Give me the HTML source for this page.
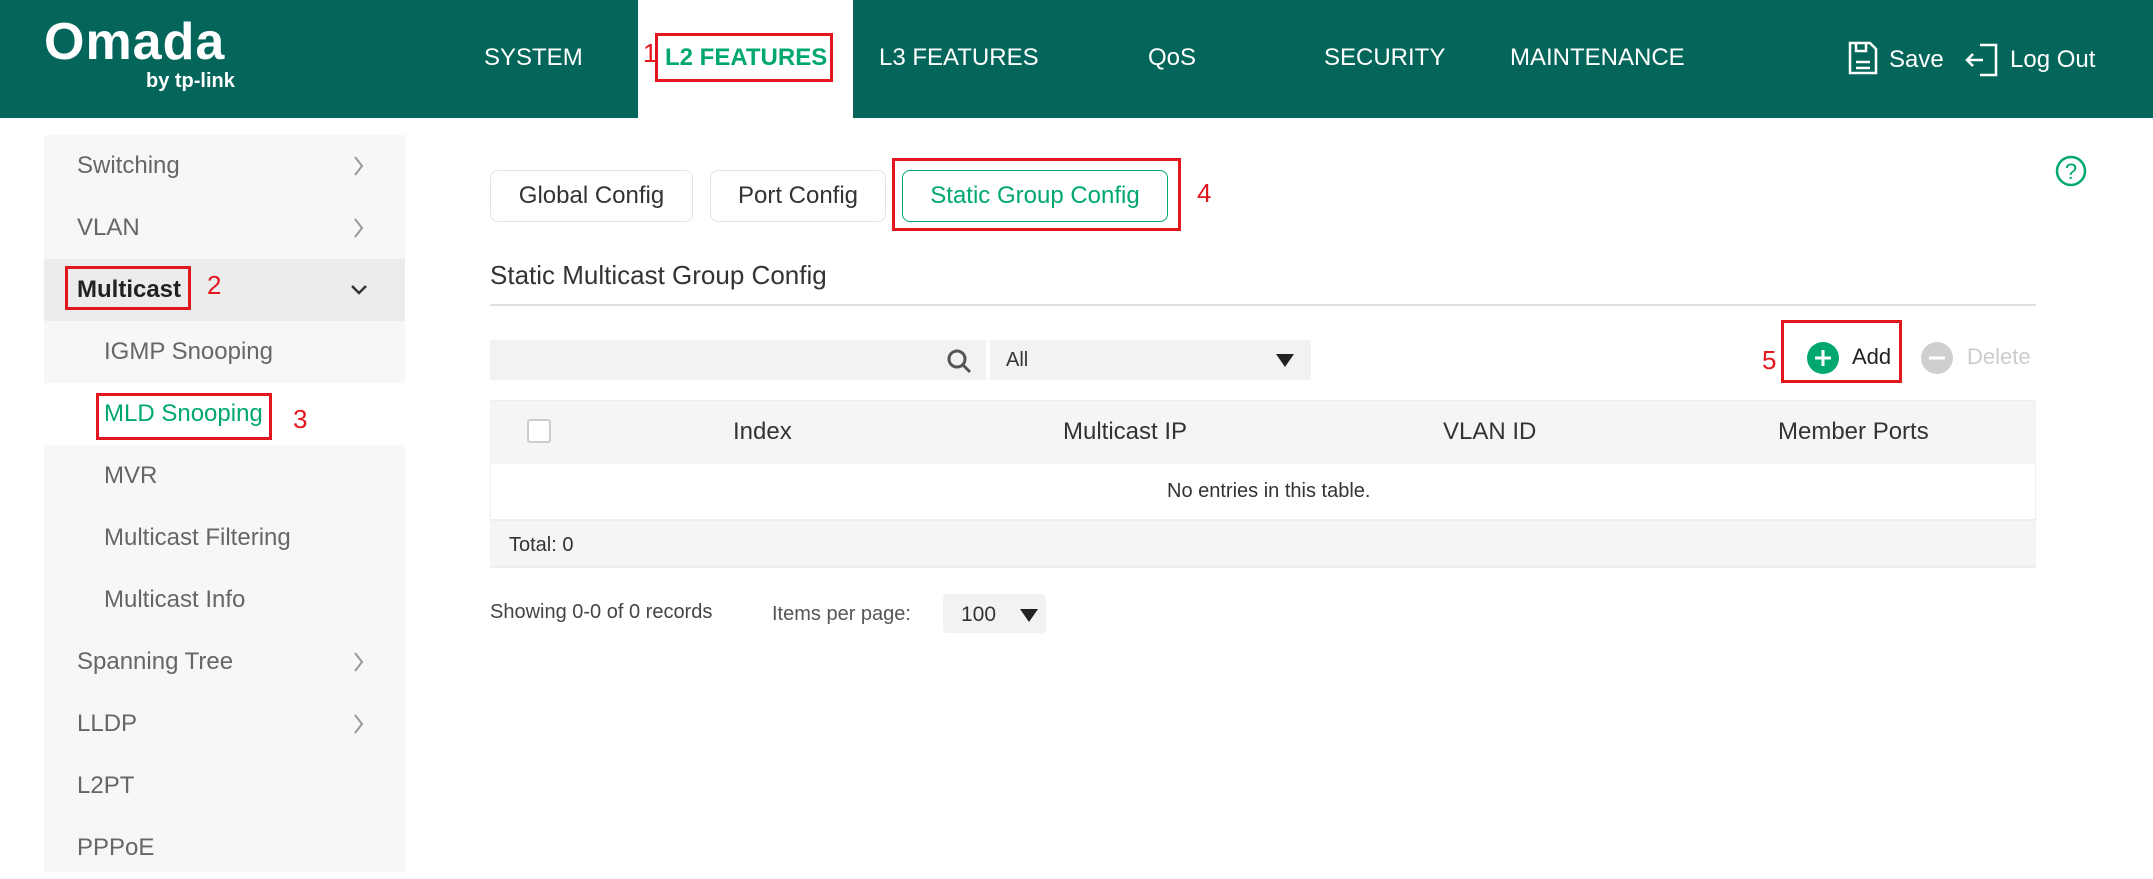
<!DOCTYPE html>
<html><head><meta charset="utf-8"><style>
*{margin:0;padding:0;box-sizing:border-box}
body{width:2153px;height:872px;background:#fff;font-family:"Liberation Sans",Arial,sans-serif;position:relative;overflow:hidden;color:#333}
.a{position:absolute;white-space:nowrap}
.hdr{position:absolute;left:0;top:0;width:2153px;height:118px;background:#04665a}
.nav{position:absolute;top:44px;font-size:24px;color:#fff}
.red{position:absolute;border:3px solid #e3161e}
.rn{position:absolute;color:#e3161e;font-size:26px}
.side{position:absolute;left:44px;top:135px;width:361px;height:737px;background:#f7f7f7}
.it{position:absolute;left:0;width:361px;height:62px;font-size:24px;color:#666;line-height:62px}
.chev{position:absolute;left:305px;top:0;width:20px;height:62px}
.tab{position:absolute;top:170px;height:52px;border:1px solid #e4e4e4;border-radius:8px;font-size:24px;line-height:50px;text-align:center;color:#333}
</style></head><body>
<div class="hdr"></div>
<div class="a" style="left:44px;top:12px;font-size:52px;font-weight:bold;color:#fff;letter-spacing:1px">Omada</div>
<div class="a" style="left:146px;top:70px;font-size:20px;font-weight:bold;color:#fff">by tp-link</div>
<div class="a" style="left:638px;top:0;width:215px;height:118px;background:#fff"></div>
<div class="nav" style="left:484px">SYSTEM</div>
<div class="nav" style="left:665px;color:#00a870;font-weight:bold">L2 FEATURES</div>
<div class="red" style="left:655px;top:33px;width:178px;height:49px"></div>
<div class="rn" style="left:643px;top:38px">1</div>
<div class="nav" style="left:879px">L3 FEATURES</div>
<div class="nav" style="left:1148px">QoS</div>
<div class="nav" style="left:1324px">SECURITY</div>
<div class="nav" style="left:1510px">MAINTENANCE</div>
<svg class="a" style="left:1847px;top:40px" width="32" height="36" viewBox="0 0 32 36" fill="none" stroke="#fff" stroke-width="2.5"><path d="M3 3h20l6 6v24H3z"/><path d="M9 3v8h10V3"/><path d="M9 22h14M9 28h14"/></svg>
<div class="nav" style="left:1889px;top:46px">Save</div>
<svg class="a" style="left:1964px;top:42px" width="36" height="36" viewBox="0 0 36 36" fill="none" stroke="#fff" stroke-width="2.5"><path d="M16 3h16v30H16"/><path d="M3 18h16M9 12l-6 6 6 6"/></svg>
<div class="nav" style="left:2010px;top:46px">Log Out</div>

<div class="side">
<div class="it" style="top:0"><span style="margin-left:33px">Switching</span><svg class="chev" viewBox="0 0 20 62"><path d="M6 22l7 9-7 9" fill="none" stroke="#999" stroke-width="2"/></svg></div>
<div class="it" style="top:62px"><span style="margin-left:33px">VLAN</span><svg class="chev" viewBox="0 0 20 62"><path d="M6 22l7 9-7 9" fill="none" stroke="#999" stroke-width="2"/></svg></div>
<div class="it" style="top:124px;background:#ececec;color:#222;font-weight:bold"><span style="margin-left:33px">Multicast</span><svg class="chev" viewBox="0 0 20 62"><path d="M3 27l7 7 7-7" fill="none" stroke="#333" stroke-width="2.5"/></svg></div>
<div class="it" style="top:186px"><span style="margin-left:60px">IGMP Snooping</span></div>
<div class="it" style="top:248px;background:#fff;color:#00a870"><span style="margin-left:60px">MLD Snooping</span></div>
<div class="it" style="top:310px"><span style="margin-left:60px">MVR</span></div>
<div class="it" style="top:372px"><span style="margin-left:60px">Multicast Filtering</span></div>
<div class="it" style="top:434px"><span style="margin-left:60px">Multicast Info</span></div>
<div class="it" style="top:496px"><span style="margin-left:33px">Spanning Tree</span><svg class="chev" viewBox="0 0 20 62"><path d="M6 22l7 9-7 9" fill="none" stroke="#999" stroke-width="2"/></svg></div>
<div class="it" style="top:558px"><span style="margin-left:33px">LLDP</span><svg class="chev" viewBox="0 0 20 62"><path d="M6 22l7 9-7 9" fill="none" stroke="#999" stroke-width="2"/></svg></div>
<div class="it" style="top:620px"><span style="margin-left:33px">L2PT</span></div>
<div class="it" style="top:682px"><span style="margin-left:33px">PPPoE</span></div>
</div>
<div class="red" style="left:65px;top:266px;width:126px;height:44px"></div>
<div class="rn" style="left:207px;top:270px">2</div>
<div class="red" style="left:96px;top:393px;width:176px;height:47px"></div>
<div class="rn" style="left:293px;top:404px">3</div>

<div class="tab" style="left:490px;width:203px">Global Config</div>
<div class="tab" style="left:710px;width:176px">Port Config</div>
<div class="tab" style="left:902px;width:266px;border-color:#00a870;color:#00a870">Static Group Config</div>
<div class="red" style="left:892px;top:158px;width:289px;height:73px"></div>
<div class="rn" style="left:1197px;top:178px">4</div>
<svg class="a" style="left:2054px;top:154px" width="34" height="34" viewBox="0 0 34 34"><circle cx="17" cy="17" r="14" fill="none" stroke="#00a870" stroke-width="2.5"/><text x="17" y="25" text-anchor="middle" font-size="22" font-family="Liberation Sans" fill="#00a870">?</text></svg>

<div class="a" style="left:490px;top:260px;font-size:26px;color:#333">Static Multicast Group Config</div>
<div class="a" style="left:490px;top:304px;width:1546px;height:2px;background:#e0e0e0"></div>

<div class="a" style="left:490px;top:340px;width:496px;height:40px;background:#f2f2f2"></div>
<svg class="a" style="left:945px;top:347px" width="28" height="28" viewBox="0 0 28 28" fill="none" stroke="#555" stroke-width="3"><circle cx="12" cy="12" r="8"/><path d="M18 18l7 7"/></svg>
<div class="a" style="left:990px;top:340px;width:321px;height:40px;background:#f2f2f2"></div>
<div class="a" style="left:1006px;top:349px;font-size:20px;color:#333">All</div>
<div class="a" style="left:1276px;top:354px;width:0;height:0;border-left:9px solid transparent;border-right:9px solid transparent;border-top:13px solid #222"></div>

<div class="red" style="left:1781px;top:320px;width:121px;height:63px"></div>
<div class="rn" style="left:1762px;top:345px">5</div>
<svg class="a" style="left:1806px;top:341px" width="34" height="34" viewBox="0 0 34 34"><circle cx="17" cy="17" r="16" fill="#00a870"/><path d="M17 9v16M9 17h16" stroke="#fff" stroke-width="3"/></svg>
<div class="a" style="left:1852px;top:344px;font-size:22px;color:#222">Add</div>
<svg class="a" style="left:1920px;top:341px" width="34" height="34" viewBox="0 0 34 34"><circle cx="17" cy="17" r="16" fill="#cfcfcf"/><path d="M9 17h16" stroke="#fff" stroke-width="3"/></svg>
<div class="a" style="left:1967px;top:344px;font-size:22px;color:#ccc">Delete</div>

<div class="a" style="left:490px;top:400px;width:1546px;height:64px;background:#f5f5f5;border-top:1px solid #eee"></div>
<div class="a" style="left:527px;top:419px;width:24px;height:24px;border:2px solid #ccc;border-radius:3px;background:#fff"></div>
<div class="a" style="left:733px;top:418px;font-size:24px;color:#333">Index</div>
<div class="a" style="left:1063px;top:418px;font-size:24px;color:#333">Multicast IP</div>
<div class="a" style="left:1443px;top:418px;font-size:24px;color:#333">VLAN ID</div>
<div class="a" style="left:1778px;top:418px;font-size:24px;color:#333">Member Ports</div>
<div class="a" style="left:490px;top:464px;width:1546px;height:55px;background:#fff;border-left:1px solid #eee;border-right:1px solid #eee"></div>
<div class="a" style="left:1167px;top:480px;font-size:20px;color:#333">No entries in this table.</div>
<div class="a" style="left:490px;top:519px;width:1546px;height:49px;background:#f5f5f5;border-top:2px solid #eee;border-bottom:2px solid #eee"></div>
<div class="a" style="left:509px;top:534px;font-size:20px;color:#333">Total: 0</div>

<div class="a" style="left:490px;top:601px;font-size:20px;color:#444">Showing 0-0 of 0 records</div>
<div class="a" style="left:772px;top:603px;font-size:20px;color:#555">Items per page:</div>
<div class="a" style="left:943px;top:594px;width:103px;height:39px;background:#f2f2f2;border-radius:4px"></div>
<div class="a" style="left:961px;top:603px;font-size:21px;color:#333">100</div>
<div class="a" style="left:1020px;top:609px;width:0;height:0;border-left:9px solid transparent;border-right:9px solid transparent;border-top:13px solid #222"></div>
</body></html>
